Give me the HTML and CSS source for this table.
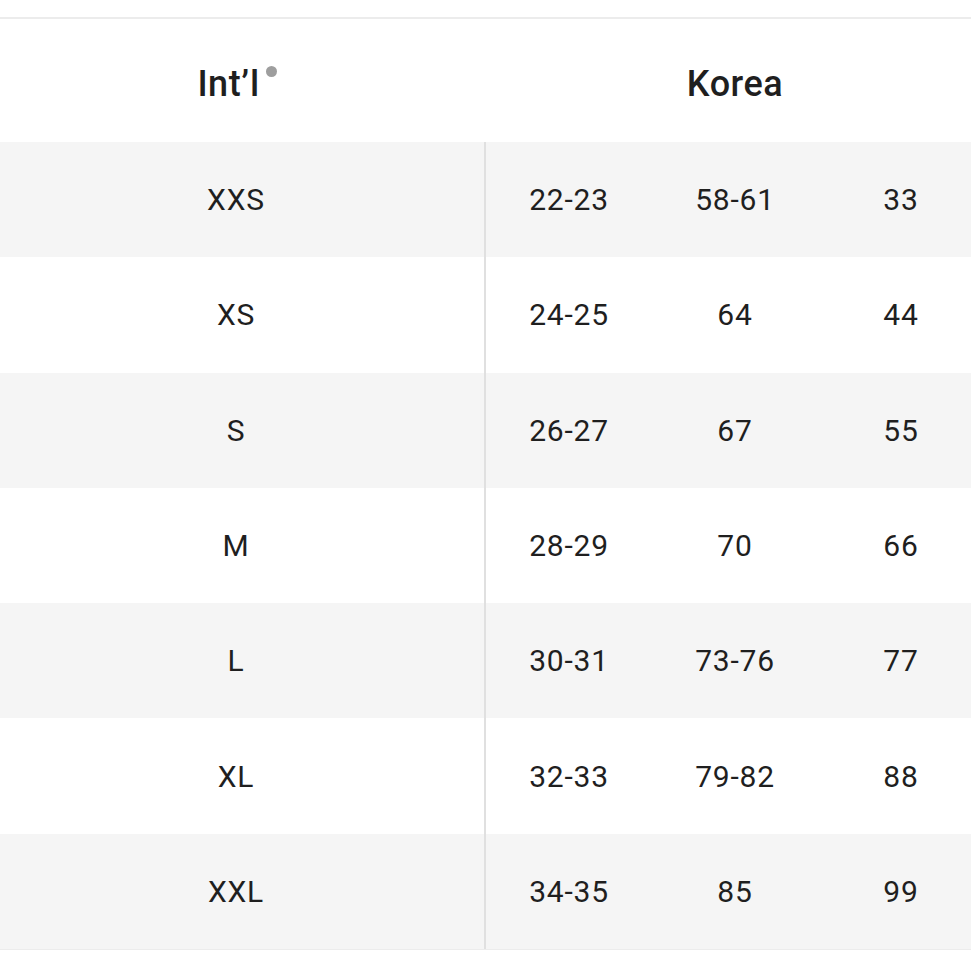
FILE: index.html
```html
<!DOCTYPE html>
<html>
<head>
<meta charset="utf-8">
<link rel="stylesheet" href="styles.css">
</head>
<body>
<div class="page">
  <div class="table">
    <div class="head">
      <div class="hcell intl"><span class="htext">Int’l</span><span class="dot"></span></div>
      <div class="hcell korea"><span class="htext">Korea</span></div>
    </div>
    <div class="row gray"><div class="c first">XXS</div><div class="c">22-23</div><div class="c">58-61</div><div class="c">33</div></div>
    <div class="row"><div class="c first">XS</div><div class="c">24-25</div><div class="c">64</div><div class="c">44</div></div>
    <div class="row gray"><div class="c first">S</div><div class="c">26-27</div><div class="c">67</div><div class="c">55</div></div>
    <div class="row"><div class="c first">M</div><div class="c">28-29</div><div class="c">70</div><div class="c">66</div></div>
    <div class="row gray"><div class="c first">L</div><div class="c">30-31</div><div class="c">73-76</div><div class="c">77</div></div>
    <div class="row"><div class="c first">XL</div><div class="c">32-33</div><div class="c">79-82</div><div class="c">88</div></div>
    <div class="row gray last"><div class="c first">XXL</div><div class="c">34-35</div><div class="c">85</div><div class="c">99</div></div>
  </div>
</div>
</body>
</html>
```
FILE: styles.css
```css
html, body {
  margin: 0;
  padding: 0;
  background: #fff;
  overflow: hidden;
}
.page {
  width: 971px;
  height: 971px;
  overflow: hidden;
  padding-top: 17px;
  box-sizing: border-box;
  font-family: Roboto, "Noto Sans", sans-serif;
  color: #1f1f1f;
}
.table {
  width: 984px;
  border-top: 2px solid #ececec;
}
.head {
  display: grid;
  grid-template-columns: 486px 498px;
  height: 123px;
}
.hcell {
  display: flex;
  align-items: center;
  justify-content: center;
  font-size: 36px;
  font-weight: 500;
  letter-spacing: 0.5px;
  padding-top: 6px;
  box-sizing: border-box;
}
.intl {
  padding-right: 12px;
}
.dot {
  align-self: center;
  width: 11px;
  height: 11px;
  margin-left: 6px;
  margin-top: -24px;
  border-radius: 50%;
  background: #9e9e9e;
}
.row {
  display: grid;
  grid-template-columns: 486px 166px 166px 166px;
  height: 115.3px;
  background: #fff;
}
.row.gray {
  background: #f5f5f5;
}
.row.last {
  border-bottom: 1px solid #ececec;
}
.c {
  display: flex;
  align-items: center;
  justify-content: center;
  font-size: 30px;
  font-weight: 400;
  letter-spacing: 0.8px;
}
.c.first {
  padding-right: 12px;
  border-right: 2px solid #e0e0e0;
  box-sizing: border-box;
}
```
